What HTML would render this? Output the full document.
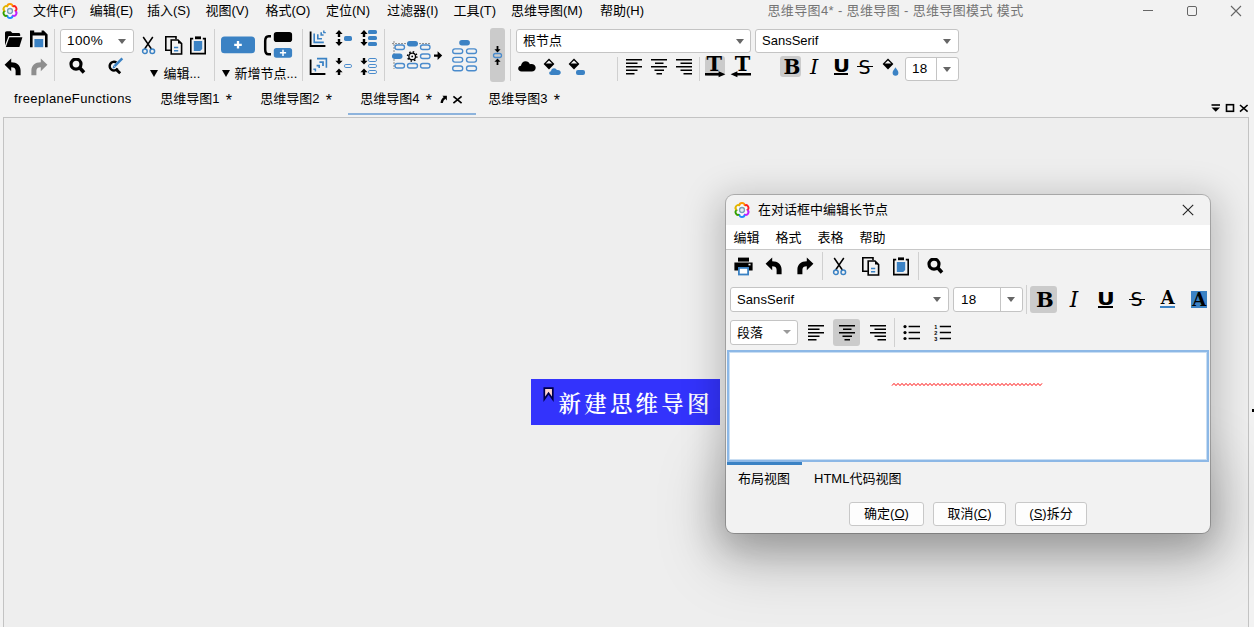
<!DOCTYPE html>
<html lang="zh-CN">
<head>
<meta charset="utf-8">
<title>思维导图4* - 思维导图 - 思维导图模式 模式</title>
<style>
html,body{margin:0;padding:0;}
body{width:1254px;height:627px;overflow:hidden;position:relative;background:#f2f2f2;
 font-family:"Liberation Sans","Noto Sans CJK SC",sans-serif;font-size:13px;color:#000;}
.abs{position:absolute;}
.t{position:absolute;white-space:nowrap;line-height:16px;font-size:13px;}
.menu .t{top:3px;}
.sep{position:absolute;width:1px;background:#d0d0d0;}
.combo{position:absolute;background:#fff;border:1px solid #c4c4c4;border-radius:3px;box-sizing:border-box;}
.combo .lbl{position:absolute;left:6px;top:0;font-size:13px;white-space:nowrap;}
.arrow{position:absolute;width:0;height:0;border-left:4.500px solid transparent;border-right:4.500px solid transparent;border-top:5px solid #666;}
svg{position:absolute;overflow:visible;}
#canvas{position:absolute;left:3px;top:117px;width:1244px;height:520px;background:#eeeeee;border:1px solid #c3c3c3;}
#node{position:absolute;left:531px;top:379px;width:189px;height:46px;background:#3333fc;}
#node .txt{position:absolute;left:27.500px;top:10px;font-family:"Liberation Serif","Noto Serif CJK SC",serif;font-weight:600;font-size:22.500px;line-height:32px;color:#fff;white-space:nowrap;letter-spacing:3.200px;}
#dlg{position:absolute;left:726px;top:195px;width:484px;height:338px;background:#f2f2f2;border-radius:8px;
 box-shadow:0 0 0 1px rgba(0,0,0,0.22),0 8.6px 36px 7.5px rgba(0,0,0,0.21);overflow:hidden;}
.btn{position:absolute;height:24px;box-sizing:border-box;border:1px solid #c8c8c8;border-radius:3px;background:#fdfdfd;text-align:center;font-size:13px;line-height:22px;}
.opill{box-sizing:border-box;border:1px solid #4a8bcc;border-radius:1.800px;}
.fmt{font-family:"DejaVu Serif","Liberation Serif",serif;font-size:21px;line-height:24px;}
.hl{position:absolute;background:#cbcbcb;border-radius:3px;}
</style>
</head>
<body>
<svg width="0" height="0" style="position:absolute">
 <defs>
  <symbol id="logo" viewBox="-10 -10 20 20"><circle r="5.300" fill="#fcfcfc"/><path d="M-2.500,-4.700 C-2.500,-6.500 -1.300,-7.050 0,-7.050 C1.500,-7.050 2.800,-6.200 2.700,-3.900" fill="none" stroke="#ff9a00" stroke-width="1.900" transform="rotate(0)"/><path d="M-2.500,-4.700 C-2.500,-6.500 -1.300,-7.050 0,-7.050 C1.500,-7.050 2.800,-6.200 2.700,-3.900" fill="none" stroke="#ff1f1f" stroke-width="1.900" transform="rotate(60)"/><path d="M-2.500,-4.700 C-2.500,-6.500 -1.300,-7.050 0,-7.050 C1.500,-7.050 2.800,-6.200 2.700,-3.900" fill="none" stroke="#c31fff" stroke-width="1.900" transform="rotate(120)"/><path d="M-2.500,-4.700 C-2.500,-6.500 -1.300,-7.050 0,-7.050 C1.500,-7.050 2.800,-6.200 2.700,-3.900" fill="none" stroke="#1f8bff" stroke-width="1.900" transform="rotate(180)"/><path d="M-2.500,-4.700 C-2.500,-6.500 -1.300,-7.050 0,-7.050 C1.500,-7.050 2.800,-6.200 2.700,-3.900" fill="none" stroke="#33a000" stroke-width="1.900" transform="rotate(240)"/><path d="M-2.500,-4.700 C-2.500,-6.500 -1.300,-7.050 0,-7.050 C1.500,-7.050 2.800,-6.200 2.700,-3.900" fill="none" stroke="#e2b600" stroke-width="1.900" transform="rotate(300)"/><circle r="2.450" fill="#e3edf2" stroke="#7a9fb7" stroke-width="1.400"/></symbol>
  <symbol id="undo" viewBox="0 0 18 18">
   <path d="M0.6,6.8 L7.2,0.4 V4.3 C13,4.3 16.6,7.6 16.6,12.6 V17.2 H11.6 V12.8 C11.6,10.2 10,9.2 7.2,9.2 V13.2 Z"/>
  </symbol>
  <symbol id="redo" viewBox="0 0 18 18">
   <path transform="translate(18,0) scale(-1,1)" d="M0.6,6.8 L7.2,0.4 V4.3 C13,4.3 16.6,7.6 16.6,12.6 V17.2 H11.6 V12.8 C11.6,10.2 10,9.2 7.2,9.2 V13.2 Z"/>
  </symbol>
  <symbol id="cut" viewBox="0 0 16 20">
   <path d="M2.2,1 L10.4,13 M11.8,1 L3.6,13" stroke="#000" stroke-width="1.5" fill="none"/>
   <circle cx="3.9" cy="15.2" r="2.3" fill="none" stroke="#3b82c4" stroke-width="1.5"/>
   <circle cx="11.3" cy="15.2" r="2.3" fill="none" stroke="#3b82c4" stroke-width="1.5"/>
  </symbol>
  <symbol id="copy" viewBox="0 0 18 19">
   <path d="M5.8,14.3 H0.8 V0.8 H11 V3.2" fill="none" stroke="#000" stroke-width="1.6"/>
   <path d="M6.2,4 H13 L16.6,7.6 V18 H6.2 Z" fill="#f2f2f2" stroke="#000" stroke-width="1.6"/>
   <path d="M13,4 V7.6 H16.6 Z" fill="#000"/>
   <path d="M9,11.5 H13.2 M9,14.8 H13.2" stroke="#3b82c4" stroke-width="1.5"/>
  </symbol>
  <symbol id="paste" viewBox="0 0 16 19">
   <path d="M3.2,2.6 H0.8 V17.6 H15.2 V2.6 H12.8" fill="none" stroke="#000" stroke-width="1.6"/>
   <rect x="5" y="0.4" width="6" height="2.8" fill="#000"/>
   <path d="M3.8,5 H12.2 V13 L10.2,15 H3.8 Z" fill="#3b82c4"/>
  </symbol>
  <symbol id="search" viewBox="0 0 18 18">
   <circle cx="8" cy="6.100" r="5" fill="none" stroke="#000" stroke-width="3.200"/>
   <path d="M11.400,9.600 L16,14.500" stroke="#000" stroke-width="3.600"/>
  </symbol>
  <symbol id="alL" viewBox="0 0 16 16">
   <path d="M0,0.8 H16 M0,4.3 H11.5 M0,7.8 H16 M0,11.3 H11.5 M0,14.8 H8.5" stroke="#000" stroke-width="1.6"/>
  </symbol>
  <symbol id="alC" viewBox="0 0 16 16">
   <path d="M0,0.8 H16 M4,4.3 H12.5 M0,7.8 H16 M3.5,11.3 H13 M5.5,14.8 H11" stroke="#000" stroke-width="1.6"/>
  </symbol>
  <symbol id="alR" viewBox="0 0 16 16">
   <path d="M0,0.8 H16 M4.5,4.3 H16 M0,7.8 H16 M4.5,11.3 H16 M7.5,14.8 H16" stroke="#000" stroke-width="1.6"/>
  </symbol>
  <symbol id="arrUpDn" viewBox="0 0 8 16">
   <path d="M4,0 L7.6,4 H5.2 V7 H2.8 V4 H0.4 Z M4,16 L7.6,12 H5.2 V9 H2.8 V12 H0.4 Z"/>
  </symbol>
  <symbol id="arrIn" viewBox="0 0 8 17">
   <path d="M4,6.6 L7.6,2.8 H5.2 V0 H2.8 V2.8 H0.4 Z M4,10.4 L7.6,14.2 H5.2 V17 H2.8 V14.2 H0.4 Z"/>
  </symbol>
  <symbol id="bucket" viewBox="0 0 12 12">
   <path d="M6,0.6 L11.4,6 L6,11.4 L0.6,6 Z" fill="#000"/>
   <path d="M6,2.6 L9.2,5.6 H2.8 Z" fill="#f6f6f6"/>
  </symbol>
  <symbol id="cloud" viewBox="0 0 18 11">
   <path d="M3.6,10.6 C1.4,10.6 0.2,9.2 0.2,7.6 C0.2,6 1.4,4.9 3,4.8 C3.2,2.2 5.2,0.3 7.6,0.3 C9.6,0.3 11.2,1.5 11.9,3.2 C12.4,3 12.9,2.9 13.4,2.9 C15.8,2.9 17.7,4.6 17.7,6.8 C17.7,9 16,10.6 13.8,10.6 Z"/>
  </symbol>
 </defs>
</svg>
<!-- TITLE / MENU BAR -->
<div class="menu" id="menubar">
 <span class="t" style="left:33px">文件(F)</span>
 <span class="t" style="left:89.800px">编辑(E)</span>
 <span class="t" style="left:146.900px">插入(S)</span>
 <span class="t" style="left:205.400px">视图(V)</span>
 <span class="t" style="left:265.500px">格式(O)</span>
 <span class="t" style="left:326px">定位(N)</span>
 <span class="t" style="left:387px">过滤器(I)</span>
 <span class="t" style="left:453.500px">工具(T)</span>
 <span class="t" style="left:511px">思维导图(M)</span>
 <span class="t" style="left:600px">帮助(H)</span>
 <span class="t" style="left:767.500px;color:#757575;letter-spacing:0.360px">思维导图4* - 思维导图 - 思维导图模式 模式</span>
</div>
<!-- TOOLBAR -->
<div id="toolbar">
<svg class="abs" style="left:0px;top:0.900px" width="20" height="20"><use href="#logo"/></svg>
<!-- window controls -->
<svg class="abs" style="left:1100px;top:0" width="154" height="22">
 <path d="M43,10.500 H53" stroke="#666" stroke-width="1" fill="none"/>
 <rect x="87.5" y="6.500" width="9" height="9" rx="1.5" fill="none" stroke="#666" stroke-width="1"/>
 <path d="M131,6 L141,16 M141,6 L131,16" stroke="#666" stroke-width="1.1" fill="none"/>
</svg>
<!-- row separators -->
<div class="sep" style="left:54px;top:29px;height:52px"></div>
<div class="sep" style="left:214px;top:29px;height:52px"></div>
<div class="sep" style="left:302px;top:29px;height:52px"></div>
<div class="sep" style="left:384px;top:29px;height:52px"></div>
<div class="sep" style="left:510px;top:29px;height:52px"></div>
<div class="sep" style="left:617px;top:57px;height:24px"></div>
<div class="sep" style="left:699px;top:57px;height:24px"></div>
<!-- open folder -->
<svg style="left:4px;top:30px" width="19" height="18" viewBox="0 0 19 18">
 <path d="M1,3.2 C1,2 1.6,1.3 2.8,1.3 H6.6 L8.4,3 H14.6 C15.6,3 16.2,3.6 16.2,4.6 V6 H4.6 L1,15.4 Z" fill="#000"/>
 <path d="M5.4,7.2 H18.4 L15.4,17 H1.8 Z" fill="#000"/>
</svg>
<!-- save -->
<svg style="left:30px;top:30px" width="18" height="18" viewBox="0 0 18 18">
 <path d="M0,0.4 H13.6 L17.6,4.4 V17.2 H15 V5.6 H2.6 V17.2 H0 Z" fill="#000"/>
 <rect x="4.2" y="0" width="7.4" height="2.4" fill="#f2f2f2"/>
 <rect x="4.4" y="9" width="8.8" height="8.2" fill="#3b82c4"/>
</svg>
<svg style="left:4px;top:58px" width="18" height="18"><use href="#undo" fill="#000"/></svg>
<svg style="left:30px;top:58px" width="18" height="18"><use href="#redo" fill="#8e8e8e"/></svg>
<!-- zoom combo -->
<div class="combo" style="left:60px;top:29px;width:74px;height:24px"><span class="lbl" style="left:6px;line-height:22px;font-size:13.5px;letter-spacing:0.4px">100%</span><i class="arrow" style="left:57px;top:9px"></i></div>
<svg style="left:68px;top:58px" width="18" height="18"><use href="#search"/></svg>
<!-- search edit -->
<svg style="left:104px;top:55px" width="22" height="22" viewBox="104 55 22 22">
 <path d="M116.400,62.600 A4.300,4.300 0 1 0 117.600,68.400" fill="none" stroke="#000" stroke-width="2.400"/>
 <path d="M116,69.400 L120.200,73.300" stroke="#000" stroke-width="2.800"/>
 <path d="M114.600,66.200 L122.300,58.400" stroke="#3b82c4" stroke-width="2.500"/>
 <path d="M112.600,68.400 L113.300,65.300 L115.600,67.700 Z" fill="#3b82c4"/>
</svg>
<svg style="left:141px;top:36px" width="16" height="20"><use href="#cut"/></svg>
<svg style="left:165px;top:36px" width="18" height="19"><use href="#copy"/></svg>
<svg style="left:190px;top:36px" width="16" height="19"><use href="#paste"/></svg>
<div class="arrow" style="left:150px;top:69.500px;border-left-width:4px;border-right-width:4px;border-top:7px solid #000"></div>
<span class="t" style="left:163.500px;top:66px">编辑...</span>
<!-- new node -->
<svg style="left:221px;top:36px" width="35" height="18" viewBox="0 0 35 18">
 <rect x="0" y="0.500" width="34" height="16.800" rx="3.6" fill="#3b82c4"/>
 <path d="M17,5 V12.600 M13.200,8.800 H20.800" stroke="#fff" stroke-width="2.300"/>
</svg>
<svg style="left:263px;top:31px" width="30" height="28" viewBox="0 0 30 28">
 <path d="M8,5.200 H5.600 C2.400,5.200 2.200,8 2.200,10 V18.400 C2.200,20.600 2.400,23.200 5.600,23.200 H8" fill="none" stroke="#000" stroke-width="2.500"/>
 <rect x="10.800" y="1" width="18.300" height="10" rx="2.800" fill="#000"/>
 <rect x="10.800" y="16.900" width="18.300" height="9.800" rx="2.600" fill="#3b82c4"/>
 <path d="M20,18.700 V24.900 M16.900,21.800 H23.100" stroke="#fff" stroke-width="1.500"/>
</svg>
<div class="arrow" style="left:222px;top:69.500px;border-left-width:4px;border-right-width:4px;border-top:7px solid #000"></div>
<span class="t" style="left:234.500px;top:66px">新增节点...</span>
<!-- fold / unfold icons -->
<svg style="left:309px;top:30px" width="18" height="18" viewBox="0 0 18 18">
 <path d="M1.600,1.400 V16 H16.400" fill="none" stroke="#000" stroke-width="1.800"/>
 <path d="M5.200,3.400 V12.400 H14.800" fill="none" stroke="#3b82c4" stroke-width="1.600"/>
 <path d="M8.800,4.200 V8.800 H13" fill="none" stroke="#3b82c4" stroke-width="1.600"/>
 <path d="M12.200,2.200 V5 H14.600" fill="none" stroke="#3b82c4" stroke-width="1.600"/>
 <path d="M14.800,0.600 V2.600 H16.800" fill="none" stroke="#3b82c4" stroke-width="1.400"/>
</svg>
<svg style="left:309px;top:57px" width="19" height="19" viewBox="0 0 19 19">
 <path d="M1.600,2.600 V17 H16.400" fill="none" stroke="#000" stroke-width="1.800"/>
 <path d="M8,1.600 H17.400 V10.800" fill="none" stroke="#3b82c4" stroke-width="1.600"/>
 <path d="M10.400,5.200 H14 V9" fill="none" stroke="#3b82c4" stroke-width="1.800"/>
 <path d="M7.600,8.600 H10.200 V11" fill="none" stroke="#3b82c4" stroke-width="1.600"/>
 <path d="M4.400,12.200 H6.400 V14.400" fill="none" stroke="#3b82c4" stroke-width="1.500"/>
</svg>
<svg style="left:335px;top:30px" width="8" height="16"><use href="#arrUpDn"/></svg>

<div class="abs" style="left:344px;top:36px;width:8px;height:4.500px;border-radius:1.700px;background:#3b82c4"></div>
<svg style="left:360px;top:30px" width="8" height="16"><use href="#arrUpDn"/></svg>
<div class="abs" style="left:368px;top:30px;width:8.500px;height:4px;border-radius:1.600px;background:#3b82c4"></div>
<div class="abs" style="left:368px;top:36px;width:8.500px;height:4px;border-radius:1.600px;background:#3b82c4"></div>
<div class="abs" style="left:368px;top:42px;width:8.500px;height:4px;border-radius:1.600px;background:#3b82c4"></div>
<svg style="left:335px;top:57.500px" width="8" height="17"><use href="#arrIn"/></svg>
<div class="abs opill" style="left:344px;top:64px;width:8px;height:4px"></div>
<svg style="left:360px;top:57.500px" width="8" height="17"><use href="#arrIn"/></svg>
<div class="abs opill" style="left:368px;top:58px;width:8.500px;height:4px"></div>
<div class="abs opill" style="left:368px;top:64px;width:8.500px;height:4px"></div>
<div class="abs opill" style="left:368px;top:70px;width:8.500px;height:4px"></div>
<!-- layout icons -->
<svg style="left:390px;top:38px" width="54" height="34" viewBox="390 38 54 34">
 <path d="M392,43.600 H431" stroke="#8a8a8a" stroke-width="1" stroke-dasharray="2 1" fill="none"/>
 <path d="M394,41 V69" stroke="#8a8a8a" stroke-width="1" stroke-dasharray="2 1" fill="none"/>
 <g fill="none" stroke="#4a8bcc" stroke-width="1.350">
  <rect x="395" y="45" width="9.500" height="4.500" rx="2.200"/>
  <rect x="420.500" y="45" width="9.500" height="4.500" rx="2.200"/>
  <rect x="420.500" y="54" width="9.500" height="4.500" rx="2.200"/>
  <rect x="395" y="63.500" width="9.500" height="4.500" rx="2.200"/>
  <rect x="407.500" y="63.500" width="10" height="4.500" rx="2.200"/>
  <rect x="420.500" y="63.500" width="9.500" height="4.500" rx="2.200"/>
 </g>
 <rect x="407" y="41" width="11" height="5.500" rx="2.700" fill="#3b82c4"/>
 <rect x="392" y="53.500" width="10.500" height="5.500" rx="2.700" fill="#3b82c4"/>
 <circle cx="412.200" cy="56.400" r="3.300" fill="none" stroke="#000" stroke-width="1.300"/>
 <circle cx="412.200" cy="56.400" r="4.600" fill="none" stroke="#000" stroke-width="1.600" stroke-dasharray="1.500 2.110"/>
 <circle cx="412.200" cy="56.400" r="0.900" fill="#000"/>
 <path d="M434,54.400 H437.600 V51.200 L442.200,55.600 L437.600,60 V56.800 H434 Z" fill="#000"/>
</svg>
<svg style="left:450px;top:38px" width="30" height="35" viewBox="450 38 30 35">
 <rect x="459.200" y="40" width="10.700" height="5.500" rx="2.700" fill="#3b82c4"/>
 <g fill="none" stroke="#4a8bcc" stroke-width="1.350">
  <rect x="452.700" y="48.800" width="10" height="4.700" rx="2.300"/>
  <rect x="466.500" y="48.800" width="10" height="4.700" rx="2.300"/>
  <rect x="452.700" y="57.400" width="10" height="4.700" rx="2.300"/>
  <rect x="466.500" y="57.400" width="10" height="4.700" rx="2.300"/>
  <rect x="452.700" y="66" width="10" height="4.700" rx="2.300"/>
  <rect x="466.500" y="66" width="10" height="4.700" rx="2.300"/>
 </g>
</svg>
<div class="hl" style="left:490px;top:28px;width:15px;height:54px;background:#cbcbcb"></div>
<svg style="left:493px;top:46px" width="9" height="20" viewBox="0 0 9 20">
 <path d="M4.500,6.600 L7.600,3.200 H5.400 V0 H3.600 V3.200 H1.400 Z M4.500,12.400 L7.600,15.800 H5.400 V19 H3.600 V15.800 H1.400 Z" fill="#000"/>
 <rect x="0.500" y="7.500" width="8" height="4" rx="2" fill="none" stroke="#4a8bcc" stroke-width="1.300"/>
</svg>
<!-- style combo -->
<div class="combo" style="left:516px;top:29px;width:235px;height:24px"><span class="lbl" style="left:6px;line-height:22px">根节点</span><i class="arrow" style="left:218.500px;top:9px"></i></div>
<div class="combo" style="left:755px;top:29px;width:204px;height:24px"><span class="lbl" style="left:6px;line-height:22px">SansSerif</span><i class="arrow" style="left:187px;top:9px"></i></div>
<svg style="left:517.500px;top:61px" width="18" height="11"><use href="#cloud" fill="#000"/></svg>
<svg style="left:542.500px;top:57.500px" width="12" height="12"><use href="#bucket"/></svg>
<svg style="left:548.500px;top:68px" width="12" height="7.300"><use href="#cloud" fill="#3b82c4"/></svg>
<svg style="left:567.500px;top:57.500px" width="12" height="12"><use href="#bucket"/></svg>
<div class="abs" style="left:575.500px;top:70px;width:9.500px;height:5px;border-radius:2px;background:#3b82c4"></div>
<svg style="left:625.500px;top:59px" width="16" height="16"><use href="#alL"/></svg>
<svg style="left:650.500px;top:59px" width="16" height="16"><use href="#alC"/></svg>
<svg style="left:675.500px;top:59px" width="16" height="16"><use href="#alR"/></svg>
<!-- T icons -->
<div class="hl" style="left:705px;top:56px;width:20px;height:20px"></div>
<svg style="left:704px;top:55px" width="22" height="24" viewBox="0 0 22 24">
 <text x="10.300" y="16.300" text-anchor="middle" font-family="'DejaVu Serif','Liberation Serif',serif" font-weight="bold" font-size="19.5" textLength="15.5" lengthAdjust="spacingAndGlyphs">T</text>
 <path d="M1,17.900 H14.600 V16.200 L21.400,19.200 L14.600,22.200 V20.500 H1 Z" fill="#000"/>
</svg>
<svg style="left:730px;top:55px" width="22" height="24" viewBox="0 0 22 24">
 <text x="12.400" y="16.300" text-anchor="middle" font-family="'DejaVu Serif','Liberation Serif',serif" font-weight="bold" font-size="19.5" textLength="15.5" lengthAdjust="spacingAndGlyphs">T</text>
 <path d="M21,17.900 H7.400 V16.200 L0.600,19.200 L7.400,22.200 V20.500 H21 Z" fill="#000"/>
</svg>
<!-- B I U S -->
<div class="hl" style="left:780px;top:56px;width:21px;height:21px"></div>
<span class="abs fmt" style="left:783.500px;top:54.500px;font-weight:bold;font-size:20px">B</span>
<span class="abs fmt" style="left:810px;top:55px;font-style:italic;font-size:21px">I</span>
<span class="abs fmt" style="left:833.300px;top:54px;font-weight:bold;font-size:17.500px;transform:scaleX(1.2);transform-origin:0 0;font-family:'DejaVu Sans','Liberation Sans',sans-serif">U</span>
<div class="abs" style="left:833.500px;top:72.700px;width:14.300px;height:1.900px;background:#000"></div>
<span class="abs fmt" style="left:858.500px;top:55px;font-size:19px;font-family:'DejaVu Sans','Liberation Sans',sans-serif">S</span>
<div class="abs" style="left:857px;top:65.500px;width:15.500px;height:1.500px;background:#000"></div>
<svg style="left:881.500px;top:57.500px" width="12" height="12"><use href="#bucket"/></svg>
<svg style="left:892px;top:67px" width="7" height="9" viewBox="0 0 7 9"><path d="M3.500,0.300 C5,2.800 6.400,4.200 6.400,5.800 A2.900,2.900 0 0 1 0.600,5.800 C0.600,4.200 2,2.800 3.500,0.300Z" fill="#3b82c4"/></svg>
<div class="combo" style="left:905px;top:57px;width:54px;height:24px"><span class="lbl" style="left:6px;line-height:22px;font-size:13.5px;letter-spacing:0.3px">18</span><div class="abs" style="left:30px;top:0;width:1px;height:22px;background:#c4c4c4"></div><i class="arrow" style="left:37px;top:9px"></i></div>
<!-- tab icons -->
<svg style="left:439px;top:94px" width="24" height="12" viewBox="439 94 24 12">
 <path d="M442.400,95.800 H446.900 V100.600 Z" fill="#000"/>
 <path d="M445.200,97.600 C443.200,98.800 441.800,100.600 441.700,103" stroke="#000" stroke-width="2.300" fill="none"/>
 <path d="M453.400,96.400 L461.600,103.200 M461.600,96.400 L453.400,103.200" stroke="#000" stroke-width="1.700"/>
</svg>
<svg style="left:1210px;top:102px" width="40" height="12" viewBox="0 0 40 12">
 <path d="M1.500,3 H10" stroke="#000" stroke-width="1.600"/>
 <path d="M1.500,5.600 H10 L5.750,9.800 Z" fill="#000"/>
 <rect x="16.500" y="2.700" width="7" height="6.600" fill="none" stroke="#000" stroke-width="1.600"/>
 <path d="M30,3 L37.600,9.600 M37.600,3 L30,9.600" stroke="#000" stroke-width="1.600"/>
</svg>
<div class="abs" style="left:1252px;top:409px;width:2px;height:3px;background:#000"></div>
</div>
<!-- TABS -->
<div id="tabs">
 <span class="t" style="left:14px;top:91px;letter-spacing:0.4px">freeplaneFunctions</span>
 <span class="t" style="left:160.3px;top:91px;word-spacing:2.5px">思维导图1 <span style="font-size:16px;line-height:0;position:relative;top:2.5px">*</span></span>
 <span class="t" style="left:260.3px;top:91px;word-spacing:2.5px">思维导图2 <span style="font-size:16px;line-height:0;position:relative;top:2.5px">*</span></span>
 <span class="t" style="left:360.3px;top:91px;word-spacing:2.5px">思维导图4 <span style="font-size:16px;line-height:0;position:relative;top:2.5px">*</span></span>
 <span class="t" style="left:488.3px;top:91px;word-spacing:2.5px">思维导图3 <span style="font-size:16px;line-height:0;position:relative;top:2.5px">*</span></span>
 <div class="abs" style="left:348px;top:113px;width:128px;height:2px;background:#8db3dc"></div>
</div>
<!-- CANVAS -->
<div id="canvas"></div>
<div id="node"><svg style="left:11px;top:7px" width="14" height="16" viewBox="542 386 14 16"><path d="M544.300,388.050 H552.800 V399.300 L548.550,393.300 L544.300,399.300 Z" fill="#ffd6cf" stroke="#00004a" stroke-width="1.700" stroke-linejoin="miter"/></svg><span class="txt">新建思维导图</span></div>
<!-- DIALOG -->
<div class="abs" style="left:726px;top:450px;width:484px;height:83px;border-radius:8px;box-shadow:0 20px 63px 8px rgba(0,0,0,0.21)"></div>
<div id="dlg">
 <span class="t" style="left:32px;top:7px">在对话框中编辑长节点</span>
 <div class="abs" style="left:0;top:30px;width:484px;height:24px;background:#fff;border-bottom:1px solid #c8c8c8"></div>
 <span class="t" style="left:7.5px;top:35px">编辑</span>
 <span class="t" style="left:49.5px;top:35px">格式</span>
 <span class="t" style="left:91.5px;top:35px">表格</span>
 <span class="t" style="left:133.5px;top:35px">帮助</span>
 <svg class="abs" style="left:5.900px;top:4.900px" width="20" height="20"><use href="#logo"/></svg>
 <svg class="abs" style="left:456px;top:9px" width="12" height="12" viewBox="0 0 12 12"><path d="M0.800,0.800 L11.200,11.200 M11.200,0.800 L0.800,11.200" stroke="#222" stroke-width="1.100" fill="none"/></svg>
 <!-- dialog toolbar row 1 (coords relative to dialog: subtract 726,195) -->
 <svg style="left:8px;top:62px" width="19" height="19" viewBox="0 0 19 19">
  <rect x="4" y="0.600" width="11" height="4" fill="#000"/>
  <path d="M0.400,5.400 H18.600 V13.600 H15 V10 H4 V13.600 H0.400 Z" fill="#000"/>
  <rect x="14.500" y="6.800" width="2" height="1.600" fill="#f2f2f2"/>
  <rect x="4.900" y="10.900" width="9.200" height="6.600" fill="#fff" stroke="#3b82c4" stroke-width="1.800"/>
 </svg>
 <svg style="left:38.900px;top:62.200px" width="18" height="18"><use href="#undo" fill="#000"/></svg>
 <svg style="left:70.200px;top:62.200px" width="18" height="18"><use href="#redo" fill="#000"/></svg>
 <div class="sep" style="left:96px;top:57px;height:28px"></div>
 <svg style="left:105.600px;top:61.800px" width="16" height="20"><use href="#cut"/></svg>
 <svg style="left:135.500px;top:62px" width="18" height="19"><use href="#copy"/></svg>
 <svg style="left:167.300px;top:61.800px" width="16" height="19"><use href="#paste"/></svg>
 <div class="sep" style="left:192px;top:57px;height:28px"></div>
 <svg style="left:199.600px;top:62.600px" width="18" height="18"><use href="#search"/></svg>
 <!-- row 2 -->
 <div class="combo" style="left:4px;top:92px;width:219px;height:25px"><span class="lbl" style="left:6px;line-height:23px;letter-spacing:0.1px">SansSerif</span><i class="arrow" style="left:202px;top:9px"></i></div>
 <div class="combo" style="left:227px;top:92px;width:70px;height:25px"><span class="lbl" style="left:7px;line-height:23px;font-size:13.5px;letter-spacing:0.3px">18</span><div class="abs" style="left:46px;top:0;width:1px;height:23px;background:#c4c4c4"></div><i class="arrow" style="left:53.200px;top:9px"></i></div>
 <div class="sep" style="left:300px;top:90px;height:29px"></div>
 <div class="hl" style="left:304px;top:91px;width:27px;height:27px"></div>
 <span class="abs fmt" style="left:310px;top:93px;font-weight:bold;font-size:21px">B</span>
 <span class="abs fmt" style="left:343.800px;top:93px;font-style:italic;font-size:21.500px">I</span>
 <span class="abs fmt" style="left:371.200px;top:91.500px;font-weight:bold;font-size:17.500px;transform:scaleX(1.25);transform-origin:0 0;font-family:'DejaVu Sans','Liberation Sans',sans-serif">U</span>
 <div class="abs" style="left:372.300px;top:111px;width:14.300px;height:2px;background:#000"></div>
 <span class="abs fmt" style="left:404.500px;top:92px;font-size:19px;font-family:'DejaVu Sans','Liberation Sans',sans-serif">S</span>
 <div class="abs" style="left:403px;top:103.500px;width:15.500px;height:1.500px;background:#000"></div>
 <span class="abs fmt" style="left:434.800px;top:91px;font-weight:bold;font-size:18px">A</span>
 <div class="abs" style="left:434px;top:110.500px;width:15px;height:2.500px;background:#3b82c4"></div>
 <div class="abs" style="left:465px;top:95.500px;width:16px;height:17.500px;background:#3b82c4"></div>
 <span class="abs fmt" style="left:466.200px;top:93px;font-weight:bold;font-size:18px">A</span>
 <!-- row 3 -->
 <div class="combo" style="left:4px;top:125px;width:68px;height:25px"><span class="lbl" style="left:6px;line-height:23px">段落</span><i class="arrow" style="left:51.600px;top:9.200px;border-top-color:#9a9a9a;border-left-width:4px;border-right-width:4px;border-top-width:4.500px"></i></div>
 <svg style="left:81.500px;top:129.500px" width="16" height="16"><use href="#alL"/></svg>
 <div class="hl" style="left:107px;top:124px;width:27px;height:27px"></div>
 <svg style="left:112.500px;top:129.500px" width="16" height="16"><use href="#alC"/></svg>
 <svg style="left:143.500px;top:129.500px" width="16" height="16"><use href="#alR"/></svg>
 <div class="sep" style="left:168px;top:123px;height:29px"></div>
 <svg style="left:177px;top:129px" width="18" height="17" viewBox="0 0 18 17">
  <circle cx="2" cy="2.600" r="1.600"/><circle cx="2" cy="8.600" r="1.600"/><circle cx="2" cy="14.500" r="1.600"/>
  <path d="M5.600,2.600 H17 M5.600,8.600 H17 M5.600,14.500 H17" stroke="#000" stroke-width="1.500"/>
 </svg>
 <svg style="left:208px;top:129px" width="18" height="17" viewBox="0 0 18 17">
  <text x="0.300" y="4.800" font-family="'Liberation Sans',sans-serif" font-weight="bold" font-size="5.500">1</text>
  <text x="0.300" y="10.800" font-family="'Liberation Sans',sans-serif" font-weight="bold" font-size="5.500">2</text>
  <text x="0.300" y="16.700" font-family="'Liberation Sans',sans-serif" font-weight="bold" font-size="5.500">3</text>
  <path d="M5.800,2.600 H17 M5.800,8.600 H17 M5.800,14.500 H17" stroke="#000" stroke-width="1.500"/>
 </svg>
 <!-- editor -->
 <div class="abs" style="left:1px;top:155px;width:482px;height:112px;box-sizing:border-box;background:#fff;border:2px solid #8db8e6;box-shadow:inset 0 0 0 1px #c9def3"></div>
 <svg style="left:165px;top:187px" width="152" height="6" viewBox="0 0 152 6">
  <path d="M1,3.6 L3,1.4 L5,3.6 L7,1.4 L9,3.6 L11,1.4 L13,3.6 L15,1.4 L17,3.6 L19,1.4 L21,3.6 L23,1.4 L25,3.6 L27,1.4 L29,3.6 L31,1.4 L33,3.6 L35,1.4 L37,3.6 L39,1.4 L41,3.6 L43,1.4 L45,3.6 L47,1.4 L49,3.6 L51,1.4 L53,3.6 L55,1.4 L57,3.6 L59,1.4 L61,3.6 L63,1.4 L65,3.6 L67,1.4 L69,3.6 L71,1.4 L73,3.6 L75,1.4 L77,3.6 L79,1.4 L81,3.6 L83,1.4 L85,3.6 L87,1.4 L89,3.6 L91,1.4 L93,3.6 L95,1.4 L97,3.6 L99,1.4 L101,3.6 L103,1.4 L105,3.6 L107,1.4 L109,3.6 L111,1.4 L113,3.6 L115,1.4 L117,3.6 L119,1.4 L121,3.6 L123,1.4 L125,3.6 L127,1.4 L129,3.6 L131,1.4 L133,3.6 L135,1.4 L137,3.6 L139,1.4 L141,3.6 L143,1.4 L145,3.6 L147,1.4 L149,3.6 L151,1.4" fill="none" stroke="#ff1010" stroke-width="1"/>
 </svg>
 <!-- bottom tabs -->
 <div class="abs" style="left:1px;top:267px;width:75px;height:3px;background:#3b82c4"></div>
 <span class="t" style="left:12px;top:276px">布局视图</span>
 <span class="t" style="left:88px;top:276px">HTML代码视图</span>
 <div class="btn" style="left:123px;top:307px;width:75px">确定(<u>O</u>)</div>
 <div class="btn" style="left:207px;top:307px;width:73px">取消(<u>C</u>)</div>
 <div class="btn" style="left:289px;top:307px;width:72px">(<u>S</u>)拆分</div>
</div>
</body>
</html>
